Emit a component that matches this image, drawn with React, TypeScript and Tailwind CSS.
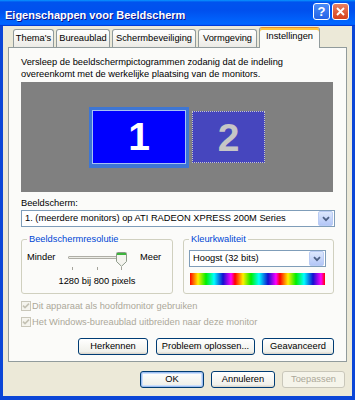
import React from 'react';

const Chevron = () => (
  <svg width="8" height="6" viewBox="0 0 8 6">
    <path d="M1 1.2 L4 4.2 L7 1.2" fill="none" stroke="#4D6185" strokeWidth="1.8" />
  </svg>
);

function Combo({ text, className }: { text: string; className: string }) {
  return (
    <div className={`flex items-center h-[17px] border border-[#7F9DB9] bg-white ${className}`}>
      <span className="flex-1 pl-[3px] leading-[15px] whitespace-nowrap overflow-hidden">{text}</span>
      <div className="w-[15px] h-[15px] mr-[1px] rounded-[2px] border border-[#BACCF4] bg-[linear-gradient(180deg,#DDE8FD,#B3C6F6)] flex items-center justify-center">
        <Chevron />
      </div>
    </div>
  );
}

function Btn({ label, w, primary, disabled }: { label: string; w: string; primary?: boolean; disabled?: boolean }) {
  const look = disabled
    ? 'border-[#C9C7BA] text-[#ACA899] bg-[#F5F4EA]'
    : primary
    ? 'border-[#003C74] bg-[linear-gradient(180deg,#FFFFFF,#F0F0EA_85%,#D6D0C5)] shadow-[inset_0_0_0_1px_#9DBDF0,inset_0_0_0_2px_#CCDFFB]'
    : 'border-[#003C74] bg-[linear-gradient(180deg,#FFFFFF,#F0F0EA_85%,#D6D0C5)]';
  return (
    <button className={`h-[17px] ${w} rounded-[3px] border flex items-center justify-center leading-none ${look}`}>
      {label}
    </button>
  );
}

function Check({ label }: { label: string }) {
  return (
    <div className="flex items-center h-[12px] gap-[1px] text-[#ACA899]">
      <span className="w-[10px] h-[10px] border border-[#C9C7BA] bg-[#F5F4EE] flex items-center justify-center">
        <svg width="8" height="8" viewBox="0 0 8 8">
          <path d="M1 3.6 L3 5.6 L7 1.6" fill="none" stroke="#C4C2B4" strokeWidth="1.6" />
        </svg>
      </span>
      <span className="whitespace-nowrap leading-[12px]">{label}</span>
    </div>
  );
}

const tabs = [
  { label: "Thema's", w: 'w-[41px]' },
  { label: 'Bureaublad', w: 'w-[54px]' },
  { label: 'Schermbeveiliging', w: 'w-[84px]' },
  { label: 'Vormgeving', w: 'w-[59px]' },
];

export default function App() {
  return (
    <div className="w-[355px] h-[400px] flex flex-col bg-[#0B46D7] overflow-hidden font-['Liberation_Sans',Arial,sans-serif] text-[9.3px] text-black">
      {/* title bar */}
      <div className="h-[26px] flex items-start pt-[3px] pl-[5px] pr-[6px] bg-[linear-gradient(180deg,#0997ff,#0053ee_8%,#0050ee_40%,#0066ff_88%,#0066ff_93%,#005bff_95%,#003dd7_96%,#003dd7)]">
        <span className="mt-[6px] text-white font-bold text-[11px] leading-[12px] whitespace-nowrap [text-shadow:1px_1px_#0f1089]">
          Eigenschappen voor Beeldscherm
        </span>
        <div className="ml-auto flex gap-[2px]">
          <div className="w-[17px] h-[17px] rounded-[3px] border border-white bg-[linear-gradient(180deg,#4A8CF7,#2362E6)] flex items-center justify-center text-white font-bold text-[13px] leading-none">
            ?
          </div>
          <div className="w-[17px] h-[17px] rounded-[3px] border border-white bg-[linear-gradient(180deg,#E98062,#D6401B)] flex items-center justify-center">
            <svg width="9" height="9" viewBox="0 0 9 9">
              <path d="M1 1 L8 8 M8 1 L1 8" stroke="white" strokeWidth="1.9" />
            </svg>
          </div>
        </div>
      </div>

      {/* body */}
      <div className="flex-1 flex flex-col mx-[3px] mb-[4px] bg-[#ECE9D8] px-[5px]">
        <div className="flex items-end gap-[2px] pl-[5px] mt-[1px] h-[20px]">
          {tabs.map((t) => (
            <div
              key={t.label}
              className={`${t.w} h-[18px] flex items-center justify-center whitespace-nowrap border border-b-0 border-[#919B9C] rounded-t-[3px] bg-[linear-gradient(180deg,#FFFFFF,#ECEBE6)]`}
            >
              {t.label}
            </div>
          ))}
          <div className="relative z-10 w-[61px] h-[21px] -mb-[1px] flex items-center justify-center pb-[2px] whitespace-nowrap border border-b-0 border-[#919B9C] border-t-[#E68B2C] rounded-t-[3px] bg-[#FBFBF9] shadow-[inset_0_2px_#FFC73C]">
            Instellingen
          </div>
        </div>

        <div className="flex flex-col border border-[#919B9C] bg-[#FBFBF9] px-[12px] pt-[8px] pb-[6px]">
          <p className="leading-[12px] whitespace-nowrap">
            Versleep de beeldschermpictogrammen zodanig dat de indeling
            <br />
            overeenkomt met de werkelijke plaatsing van de monitors.
          </p>

          <div className="mt-[2px] h-[110px] w-[312px] bg-[#808080] flex items-center justify-center gap-[3px]">
            <div className="w-[100px] h-[61px] border-[3px] border-b-[4px] border-[#3E76D4]">
              <div className="w-full h-full border border-[#A6C1F3] bg-[#0000FF] flex items-center justify-center text-white font-bold text-[39px] leading-none">
                1
              </div>
            </div>
            <div className="w-[73px] h-[52px] border border-dotted border-[#C8C8C8] bg-[#4646BE] flex items-center justify-center text-[#C6C6C6] font-bold text-[39px] leading-none">
              2
            </div>
          </div>

          <div className="mt-[5px] leading-[12px]">Beeldscherm:</div>
          <Combo className="mt-[1px] w-[314px]" text="1. (meerdere monitors) op ATI RADEON XPRESS 200M Series" />

          <div className="mt-[6px] flex justify-between">
            <fieldset className="w-[152px] h-[61px] border border-[#D0D0BF] rounded-[3px] px-[5px]">
              <legend className="px-[2px] text-[#0046D5] leading-[12px]">Beeldschermresolutie</legend>
              <div className="mt-[5px] flex items-start">
                <span className="w-[39px] leading-[15px]">Minder</span>
                <div className="relative w-[62px] h-[21px]">
                  <div className="absolute left-[2px] top-[6px] w-[55px] h-[3px] rounded-[1px] border border-[#AFAEA6] bg-[#EDEDE6]" />
                  <div className="absolute left-[6px] top-[17px] w-[1px] h-[3px] bg-[#A5A49C]" />
                  <div className="absolute left-[31px] top-[17px] w-[1px] h-[3px] bg-[#A5A49C]" />
                  <div className="absolute left-[55px] top-[17px] w-[1px] h-[3px] bg-[#A5A49C]" />
                  <svg className="absolute left-[50px] top-[2px]" width="11" height="15" viewBox="0 0 11 15">
                    <path d="M1.5 0.5 H9.5 Q10.5 0.5 10.5 1.5 V9.5 L5.5 14.3 L0.5 9.5 V1.5 Q0.5 0.5 1.5 0.5 Z" fill="#F4F4EF" stroke="#8E9A8A" strokeWidth="1" />
                    <rect x="1" y="1" width="9" height="2" fill="#3DB53D" />
                  </svg>
                </div>
                <span className="ml-[12px] leading-[15px]">Meer</span>
              </div>
              <div className="mt-[4px] leading-[12px] text-center">1280 bij 800 pixels</div>
            </fieldset>

            <fieldset className="w-[151px] h-[61px] border border-[#D0D0BF] rounded-[3px] px-[5px]">
              <legend className="px-[2px] text-[#0046D5] leading-[12px]">Kleurkwaliteit</legend>
              <Combo className="mt-[5px] w-[137px]" text="Hoogst (32 bits)" />
              <div className="mt-[6px] ml-[1px] w-[135px] h-[12px] bg-[repeating-linear-gradient(90deg,#ff0000_0px,#ffee00_8px,#00ee00_16px,#00ffff_24px,#1010d0_33px,#ff00ff_41px,#ff0000_45px)]" />
            </fieldset>
          </div>

          <div className="mt-[6px]">
            <Check label="Dit apparaat als hoofdmonitor gebruiken" />
          </div>
          <div className="mt-[4px]">
            <Check label="Het Windows-bureaublad uitbreiden naar deze monitor" />
          </div>

          <div className="mt-[10px] flex justify-end">
            <Btn label="Herkennen" w="w-[70px]" />
            <div className="ml-[8px]">
              <Btn label="Probleem oplossen..." w="w-[99px]" />
            </div>
            <div className="ml-[7px]">
              <Btn label="Geavanceerd" w="w-[72px]" />
            </div>
          </div>
        </div>

        <div className="mt-[9px] flex justify-end gap-[7px] pr-[2px]">
          <Btn label="OK" w="w-[64px]" primary />
          <Btn label="Annuleren" w="w-[64px]" />
          <Btn label="Toepassen" w="w-[63px]" disabled />
        </div>
      </div>
    </div>
  );
}
